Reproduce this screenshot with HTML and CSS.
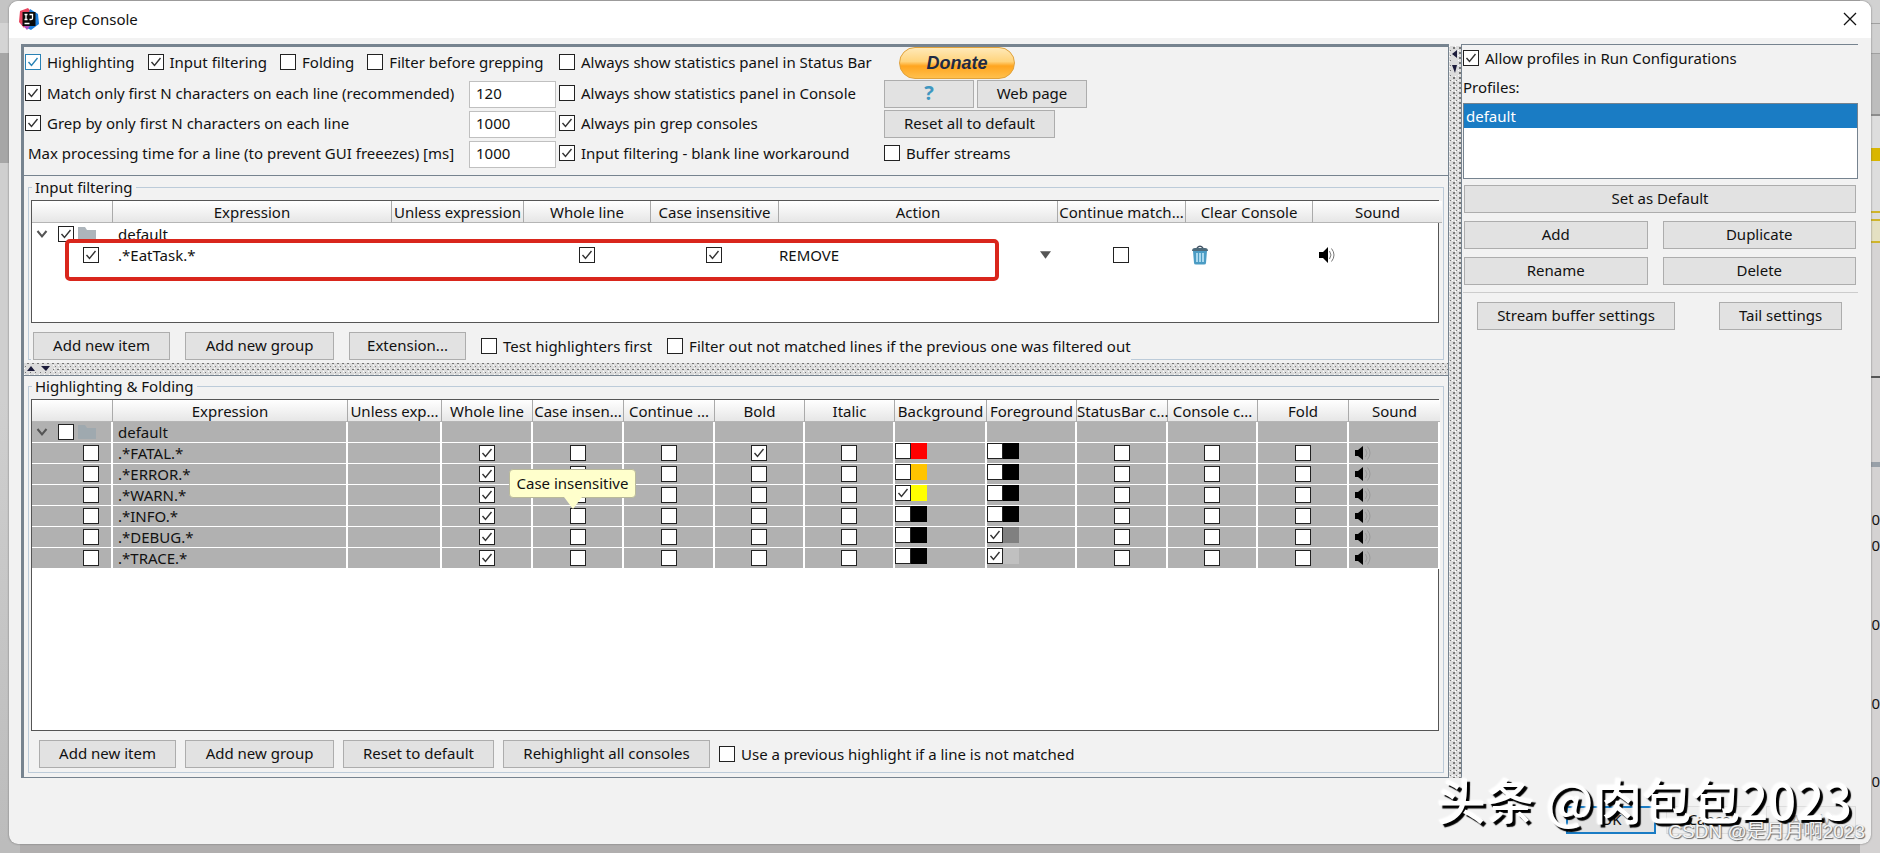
FILE: index.html
```
<!DOCTYPE html>
<html lang="en">
<head>
    <meta charset="UTF-8">
    <meta name="viewport" content="width=device-width, initial-scale=1.0">
    <title>Grep Console</title>
    <link rel="stylesheet" href="styles.css">
</head>
<body>
    <div class="ide ide-left"></div>
    <div class="ide ide-right">
        <span class="digit d1">0</span>
        <span class="digit d2">0</span>
        <span class="digit d3">0</span>
        <span class="digit d4">0</span>
        <span class="digit d5">0</span>
    </div>

    <svg width="0" height="0" class="defs">
        <symbol id="chevron" viewBox="0 0 12 12"><path d="M1.500 3l4.500 5.500L10.500 3" fill="none" stroke="#555" stroke-width="2"/></symbol>
        <symbol id="folder" viewBox="0 0 18 16"><path d="M0 1h7l2 3h9v11H0z" fill="currentColor"/></symbol>
        <symbol id="speaker" viewBox="0 0 18 16">
            <path d="M1 5h4l5-5v16l-5-5H1z"/>
            <path d="M11.500 4q3 4 0 8M13.500 1.500q5 6.500 0 13" fill="none" stroke="#777" stroke-width="1"/>
        </symbol>
        <symbol id="speaker-off" viewBox="0 0 18 16">
            <path d="M1 5h3l5-4v14l-5-4H1z"/>
            <path d="M11.500 4q3 4 0 8M13.500 1.500q5 6.500 0 13" fill="none" stroke="#999" stroke-width="1"/>
        </symbol>
        <symbol id="trash" viewBox="0 0 18 20">
            <path d="M6 3q3-3.500 6 0" fill="none" stroke="#456" stroke-width="1.500"/>
            <path d="M1 6q0-3 3-3h10q3 0 3 3z" fill="#4e6a7a"/>
            <path d="M2 6h14l-1 12q0 1.500-2 1.500H5q-2 0-2-1.500z" fill="#4b9cc4"/>
            <path d="M6 8v9M9 8v9M12 8v9" stroke="#c9ecfb" stroke-width="1.500"/>
        </symbol>
    </svg>

    <div class="dialog">
        <header class="titlebar">
            <svg class="logo" viewBox="0 0 20 22">
                <path d="M1 3l8-3 5 6-9 14-5-6z" fill="#e8455f"/>
                <path d="M11 1l8 5 1 10-8 6-6-3z" fill="#1d7ddb"/>
                <path d="M2 15l6 7 3-4z" fill="#b24fc0"/>
                <rect x="3.500" y="4" width="13" height="14" fill="#0a0a0a"/>
                <path d="M5.500 6.500h3M7 6.500v5M5.500 11.500h3M10.500 6.500h3v4q0 1-1.500 1h-1.500M5.500 15.500h5" fill="none" stroke="#fff" stroke-width="1.300"/>
            </svg>
            <h1>Grep Console</h1>
            <button class="close" aria-label="Close">
                <svg viewBox="0 0 14 14"><path d="M1 1l12 12M13 1L1 13" stroke="#111" stroke-width="1.300"/></svg>
            </button>
        </header>

        <div class="content">
            <main class="left">
                <section class="options">
                    <div class="row-main">
                        <label class="focus"><input type="checkbox" checked>Highlighting</label>
                        <label><input type="checkbox" checked>Input filtering</label>
                        <label><input type="checkbox">Folding</label>
                        <label><input type="checkbox">Filter before grepping</label>
                    </div>
                    <label><input type="checkbox">Always show statistics panel in Status Bar</label>
                    <div><button class="donate">Donate</button></div>

                    <label><input type="checkbox" checked>Match only first N characters on each line (recommended)</label>
                    <input type="text" value="120" aria-label="Match limit">
                    <label><input type="checkbox">Always show statistics panel in Console</label>
                    <div class="pair">
                        <button class="btn help">?</button>
                        <button class="btn web">Web page</button>
                    </div>

                    <label><input type="checkbox" checked>Grep by only first N characters on each line</label>
                    <input type="text" value="1000" aria-label="Grep limit">
                    <label><input type="checkbox" checked>Always pin grep consoles</label>
                    <div class="pair"><button class="btn reset-all">Reset all to default</button></div>

                    <label class="plain" for="max-time">Max processing time for a line (to prevent GUI freeezes) [ms]</label>
                    <input type="text" id="max-time" value="1000">
                    <label><input type="checkbox" checked>Input filtering - blank line workaround</label>
                    <label><input type="checkbox">Buffer streams</label>
                </section>

                <fieldset class="group filtering">
                    <legend>Input filtering</legend>
                    <div class="table-box">
                        <table>
                            <colgroup>
                                <col style="width:81px"><col style="width:279px"><col style="width:132px">
                                <col style="width:127px"><col style="width:128px"><col style="width:279px">
                                <col style="width:128px"><col style="width:127px"><col style="width:129px">
                            </colgroup>
                            <thead>
                                <tr>
                                    <th></th><th>Expression</th><th>Unless expression</th><th>Whole line</th>
                                    <th>Case insensitive</th><th>Action</th><th>Continue match...</th>
                                    <th>Clear Console</th><th>Sound</th>
                                </tr>
                            </thead>
                            <tbody>
                                <tr>
                                    <td class="tree">
                                        <svg class="chevron"><use href="#chevron"/></svg>
                                        <input type="checkbox" aria-label="default" checked>
                                        <svg class="folder"><use href="#folder"/></svg>
                                    </td>
                                    <td>default</td><td></td><td></td><td></td><td></td><td></td><td></td><td></td>
                                </tr>
                                <tr>
                                    <td class="tree leaf"><input type="checkbox" aria-label="EatTask" checked></td>
                                    <td>.*EatTask.*</td>
                                    <td></td>
                                    <td class="mid"><input type="checkbox" aria-label="Whole line" checked></td>
                                    <td class="mid"><input type="checkbox" aria-label="Case insensitive" checked></td>
                                    <td class="action"><select aria-label="Action"><option>REMOVE</option></select></td>
                                    <td class="mid"><input type="checkbox" aria-label="Continue matching"></td>
                                    <td><svg class="trash"><use href="#trash"/></svg></td>
                                    <td><svg class="speaker"><use href="#speaker"/></svg></td>
                                </tr>
                            </tbody>
                        </table>
                        <div class="marker"></div>
                    </div>
                    <div class="bar bar-top">
                        <button class="btn w-item">Add new item</button>
                        <button class="btn w-group">Add new group</button>
                        <button class="btn w-ext">Extension...</button>
                        <label><input type="checkbox">Test highlighters first</label>
                        <label><input type="checkbox">Filter out not matched lines if the previous one was filtered out</label>
                    </div>
                </fieldset>

                <div class="split-h">
                    <svg viewBox="0 0 26 7"><path d="M0 6l4-5 4 5zM14 1h9l-4 5z" fill="#1b1b3a"/></svg>
                </div>

                <fieldset class="group folding">
                    <legend>Highlighting &amp; Folding</legend>
                    <div class="table-box">
                        <table class="grid">
                            <colgroup>
                                <col style="width:81px"><col style="width:235px"><col style="width:94px">
                                <col style="width:91px"><col style="width:91px"><col style="width:91px">
                                <col style="width:90px"><col style="width:90px"><col style="width:92px">
                                <col style="width:90px"><col style="width:91px"><col style="width:90px">
                                <col style="width:91px"><col style="width:91px">
                            </colgroup>
                            <thead>
                                <tr>
                                    <th></th><th>Expression</th><th>Unless exp...</th><th>Whole line</th>
                                    <th>Case insen...<div class="tip">Case insensitive</div></th>
                                    <th>Continue ...</th><th>Bold</th><th>Italic</th>
                                    <th>Background</th><th>Foreground</th><th>StatusBar c...</th>
                                    <th>Console c...</th><th>Fold</th><th>Sound</th>
                                </tr>
                            </thead>
                            <tbody id="rules">
                                <tr>
                                    <td class="tree">
                                        <svg class="chevron"><use href="#chevron"/></svg>
                                        <input type="checkbox" aria-label="default">
                                        <svg class="folder"><use href="#folder"/></svg>
                                    </td>
                                    <td>default</td><td></td><td></td><td></td><td></td><td></td>
                                    <td></td><td></td><td></td><td></td><td></td><td></td><td></td>
                                </tr>
                            </tbody>
                        </table>
                    </div>
                    <div class="bar bar-bottom">
                        <button class="btn w-item">Add new item</button>
                        <button class="btn w-group">Add new group</button>
                        <button class="btn w-reset">Reset to default</button>
                        <button class="btn w-rehigh">Rehighlight all consoles</button>
                        <label><input type="checkbox">Use a previous highlight if a line is not matched</label>
                    </div>
                </fieldset>
            </main>

            <div class="split-v">
                <svg viewBox="0 0 7 26"><path d="M6 0v8L1 4zM1 15h5l-2 8z" fill="#1b1b3a"/></svg>
            </div>

            <aside class="right">
                <label><input type="checkbox" checked>Allow profiles in Run Configurations</label>
                <p>Profiles:</p>
                <ul class="profiles">
                    <li class="selected">default</li>
                </ul>
                <div class="profile-buttons">
                    <button class="btn wide">Set as Default</button>
                    <button class="btn">Add</button>
                    <button class="btn">Duplicate</button>
                    <button class="btn">Rename</button>
                    <button class="btn">Delete</button>
                </div>
                <div class="settings">
                    <button class="btn w-stream">Stream buffer settings</button>
                    <button class="btn w-tail">Tail settings</button>
                </div>
            </aside>
        </div>

        <footer class="footer">
            <button class="btn ok">OK</button>
            <button class="btn faint">Cancel</button>
            <button class="btn faint disabled">Apply</button>
        </footer>
    </div>

    <div class="stamp stamp-big">头条 @肉包包2023</div>
    <div class="stamp stamp-small">CSDN @是月月啊2023</div>

    <script>
        const rules = [
            { name: 'FATAL', bold: true, bg: '#ff0000', fg: '#000000' },
            { name: 'ERROR', bg: '#ffc400', fg: '#000000' },
            { name: 'WARN', bgOn: true, bg: '#ffff00', fg: '#000000' },
            { name: 'INFO', bg: '#000000', fg: '#000000' },
            { name: 'DEBUG', bg: '#000000', fgOn: true, fg: '#808080' },
            { name: 'TRACE', bg: '#000000', fgOn: true, fg: '#c0c0c0' }
        ];

        function box(label, checked) {
            return `<input type="checkbox" aria-label="${label}"${checked ? ' checked' : ''}>`;
        }

        function boxCell(label, checked) {
            return `<td class="mid">${box(label, checked)}</td>`;
        }

        function colorCell(label, checked, color) {
            return `<td class="color">${box(label, checked)}<span class="swatch" style="background:${color}"></span></td>`;
        }

        document.getElementById('rules').insertAdjacentHTML('beforeend', rules.map(r => `
            <tr>
                <td class="tree leaf">${box(r.name)}</td>
                <td>.*${r.name}.*</td>
                <td></td>
                ${boxCell('Whole line', true)}
                ${boxCell('Case insensitive')}
                ${boxCell('Continue matching')}
                ${boxCell('Bold', r.bold)}
                ${boxCell('Italic')}
                ${colorCell('Background', r.bgOn, r.bg)}
                ${colorCell('Foreground', r.fgOn, r.fg)}
                ${boxCell('StatusBar count')}
                ${boxCell('Console count')}
                ${boxCell('Fold')}
                <td><svg class="speaker"><use href="#speaker-off"/></svg></td>
            </tr>`).join(''));
    </script>
</body>
</html>
```
FILE: styles.css
```
* {
    box-sizing: border-box;
}
body {
    margin: 0;
    padding: 1px 9px 9px;
    min-height: 100vh;
    display: flex;
    background: #b0aeae;
    color: #111;
    font-family: "Noto Sans", "Noto Sans CJK SC", sans-serif;
    font-size: 15px;
    line-height: 18px;
}
button, input, select {
    font: inherit;
    color: inherit;
}
.defs {
    position: absolute;
}

/* editor window behind the dialog */
.ide {
    position: absolute;
    top: 0;
    bottom: 0;
    width: 20px;
    overflow: hidden;
}
.ide-left {
    left: 0;
    background: linear-gradient(#c4c4c4 0 23px, #d4d4d4 23px 53px, #a6a6a6 53px 163px, #cfcfcf 163px 400px, #bcbcbc 843px);
}
.ide-right {
    right: 0;
    background: linear-gradient(#d2d2d2 0 23px, #a0a0a0 23px 24px, #d0d0d0 24px 53px, #a0a0a0 53px 54px, #bdbdbd 54px 114px, #8c8c8c 114px 116px, #ddd 116px 148px, #d9b600 148px 161px, #ddd 161px 211px, #d0b52a 211px 213px, #ddd 213px 219px, #d0b52a 219px 221px, #e4e0c2 221px 241px, #d0b52a 241px 243px, #d6d4d4 243px 376px, #555 376px 378px, #d4d2d2 378px 462px, #98a0a8 462px 467px, #d4d2d2 467px);
}
.digit {
    position: absolute;
    right: 0;
}
.d1 { top: 510px; }
.d2 { top: 536px; }
.d3 { top: 615px; }
.d4 { top: 694px; }
.d5 { top: 772px; }

.dialog {
    position: relative;
    flex: 1;
    min-width: 0;
    display: flex;
    flex-direction: column;
    background: #f2f2f2;
    border-radius: 9px;
    box-shadow: 0 0 2px #666;
    overflow: hidden;
}
.titlebar {
    display: flex;
    align-items: center;
    height: 37px;
    padding: 0 10px 2px;
    background: #fff;
}
.titlebar h1 {
    flex: 1;
    margin: 0 0 0 4px;
    font-size: 15px;
    font-weight: normal;
}
.logo {
    width: 20px;
    height: 22px;
}
.close {
    display: flex;
    padding: 4px;
    border: 0;
    background: none;
}
.close svg {
    width: 14px;
    height: 14px;
}
.content {
    flex: 1;
    display: flex;
    padding: 6px 13px 0 12px;
}

/* controls */
label {
    display: flex;
    align-items: center;
    gap: 6px;
    padding-bottom: 2px;
    white-space: nowrap;
}
input[type="checkbox"] {
    appearance: none;
    flex: none;
    width: 16px;
    height: 16px;
    margin: 0;
    border: 1px solid #222;
    background: #fff;
}
input[type="checkbox"]:checked {
    background-image: url("data:image/svg+xml,%3Csvg xmlns='http://www.w3.org/2000/svg' viewBox='0 0 14 14'%3E%3Cpath d='M2.500 7l3 3.500 6-7.500' fill='none' stroke='%23333' stroke-width='1.400'/%3E%3C/svg%3E");
}
.focus input[type="checkbox"] {
    border-color: #2a82b5;
    background-image: url("data:image/svg+xml,%3Csvg xmlns='http://www.w3.org/2000/svg' viewBox='0 0 14 14'%3E%3Cpath d='M2.500 7l3 3.500 6-7.500' fill='none' stroke='%232a82b5' stroke-width='1.400'/%3E%3C/svg%3E");
}
input[type="text"] {
    width: 87px;
    height: 27px;
    padding: 0 6px 2px;
    border: 1px solid #c0c0c0;
    background: #fff;
}
.btn {
    height: 28px;
    padding: 0 0 2px;
    border: 1px solid #adadad;
    background: #e2e2e2;
    white-space: nowrap;
}

/* top options */
.left {
    flex: 1;
    min-width: 0;
    display: flex;
    flex-direction: column;
    border: 1px solid #76838f;
    border-width: 3px 1px 1px 3px;
}
.options {
    display: grid;
    grid-template-columns: 444px 90px 325px 1fr;
    grid-template-rows: 32px 30px 30px 30px;
    align-items: center;
    height: 129px;
    padding-left: 1px;
    border-bottom: 1px solid #76838f;
}
.row-main {
    grid-column: span 2;
    display: flex;
    gap: 13px;
}
.plain {
    padding-left: 3px;
}
.donate {
    display: block;
    width: 116px;
    height: 32px;
    margin-left: 15px;
    border: 1px solid #e0a23c;
    border-radius: 16px;
    background: linear-gradient(#ffe9b8, #ffd47c 45%, #ffa51f 60%, #ffc04d);
    color: #1f2a44;
    font: italic bold 18px "Liberation Sans", Arial, sans-serif;
}
.pair {
    display: flex;
    gap: 3px;
}
.help {
    width: 90px;
    color: #3f97c0;
    font-size: 20px;
    font-weight: bold;
}
.web { width: 110px; }
.reset-all { width: 171px; }

/* groups */
.group {
    display: flex;
    flex-direction: column;
    min-width: 0;
    margin: 2px 4px 0;
    padding: 4px 4px 0 2px;
    border: 1px solid #bccbd9;
}
.group legend {
    margin-left: 1px;
    padding: 0 3px;
}
.folding {
    flex: 1;
    margin: 1px 4px 4px;
}
.table-box {
    position: relative;
    border: 1px solid #555;
    background: #fff;
}
.filtering .table-box {
    height: 123px;
}
.folding .table-box {
    flex: 1;
}
table {
    width: 100%;
    table-layout: fixed;
    border-collapse: separate;
    border-spacing: 0;
}
th {
    position: relative;
    height: 22px;
    padding: 0;
    border-right: 1px solid #aaa;
    border-bottom: 1px solid #b5b5b5;
    background: linear-gradient(#fff, #e6e6e6);
    font-weight: normal;
    white-space: nowrap;
}
th:last-child {
    border-right: 0;
}
td {
    height: 21px;
    padding: 0 0 0 5px;
    line-height: 18px;
    white-space: nowrap;
}
td svg, td input {
    display: block;
}
.grid td {
    background: #b1b1b1;
    border-right: 2px solid #fff;
    border-bottom: 1px solid #fff;
}
.mid {
    padding: 0 2px 0 0;
}
.grid .mid {
    padding: 0;
}
.mid input {
    margin: 0 auto;
}
.tree input, .tree svg {
    display: inline-block;
    vertical-align: middle;
}
.tree {
    padding: 0 0 0 4px;
    font-size: 0;
    line-height: 0;
}
.leaf {
    padding-left: 51px;
}
.chevron {
    width: 12px;
    height: 12px;
    margin-right: 10px;
}
.folder {
    width: 18px;
    height: 16px;
    margin-left: 4px;
    color: #adb5bb;
}
.grid .folder {
    color: #9fa9af;
}
.speaker {
    width: 18px;
    height: 16px;
}
.trash {
    width: 18px;
    height: 20px;
}
.action {
    padding: 0;
}
.action select {
    display: block;
    width: 100%;
    height: 20px;
    padding: 0;
    border: 0;
    appearance: none;
    background: url("data:image/svg+xml,%3Csvg xmlns='http://www.w3.org/2000/svg' viewBox='0 0 12 8'%3E%3Cpath d='M0 0h12L6 8z' fill='%23555'/%3E%3C/svg%3E") no-repeat right 7px center / 11px 8px;
}
.color {
    padding: 0;
    font-size: 0;
    line-height: 0;
    vertical-align: top;
}
.color input, .swatch {
    display: inline-block;
    vertical-align: top;
}
.swatch {
    width: 16px;
    height: 16px;
}
.marker {
    position: absolute;
    left: 33px;
    top: 38px;
    width: 934px;
    height: 42px;
    border: 4px solid #d9261c;
    border-radius: 5px;
}
.tip {
    position: absolute;
    z-index: 2;
    left: -24px;
    top: 69px;
    width: 127px;
    height: 29px;
    border: 1px solid #b9b99a;
    border-radius: 4px;
    background: #ffffcc;
    line-height: 27px;
}
.tip::after {
    content: "";
    position: absolute;
    left: 54px;
    top: 27px;
    width: 18px;
    height: 12px;
    background: #ffffcc;
    clip-path: polygon(0 0, 100% 0, 50% 100%);
}
.bar {
    display: flex;
    align-items: center;
}
.bar label {
    padding-bottom: 0;
}
.bar-top {
    position: relative;
    align-self: flex-start;
    gap: 15px;
    margin: 9px 0 -1px;
    padding-left: 2px;
    background: #f2f2f2;
}
.bar-bottom {
    gap: 9px;
    margin: 9px 0 4px;
    padding-left: 8px;
}
.w-item { width: 137px; }
.w-group { width: 149px; }
.w-ext { width: 117px; }
.w-reset { width: 151px; }
.w-rehigh { width: 207px; }

/* splitters */
.split-h {
    height: 13px;
    margin-top: 3px;
    padding: 2px 3px;
    border-bottom: 1px solid #76838f;
    background: url("data:image/svg+xml,%3Csvg xmlns='http://www.w3.org/2000/svg' width='5' height='6'%3E%3Cpath d='M1 1h1v1H1zM3 4h2v1H3z' fill='%23777'/%3E%3Cpath d='M0 3h1v1H0zM4 0h1v1H4z' fill='%23fff'/%3E%3C/svg%3E") 0 2px #dcdcdc;
}
.split-h svg {
    display: block;
    width: 26px;
    height: 7px;
    background: #dcdcdc;
}
.split-v {
    width: 12px;
    margin-top: 2px;
    padding: 4px 2px;
    background: url("data:image/svg+xml,%3Csvg xmlns='http://www.w3.org/2000/svg' width='6' height='5'%3E%3Cpath d='M2 1h2v2H2zM5 4h1v1H5z' fill='%23777'/%3E%3Cpath d='M1 4h1v1H1zM4 0h1v1H4z' fill='%23fff'/%3E%3C/svg%3E") 2px 0 #dcdcdc;
}
.split-v svg {
    display: block;
    width: 7px;
    height: 26px;
    background: #dcdcdc;
}

/* profiles */
.right {
    width: 397px;
    padding: 4px 0 0 1px;
    border-left: 1px solid #76838f;
    border-top: 1px solid #76838f;
}
.right p {
    margin: 9px 0 7px;
}
.profiles {
    height: 76px;
    margin: 0;
    padding: 0;
    border: 1px solid #76838f;
    background: #fff;
    list-style: none;
}
.selected {
    padding-left: 2px;
    background: #1a7cc4;
    color: #fff;
    line-height: 24px;
}
.profile-buttons {
    display: grid;
    grid-template-columns: 184fr 194fr;
    gap: 8px 15px;
    padding: 6px 2px 7px 1px;
    border-bottom: 1px solid #ccc;
}
.wide {
    grid-column: span 2;
}
.settings {
    display: flex;
    justify-content: space-between;
    padding: 9px 16px 0 14px;
}
.w-stream { width: 198px; }
.w-tail { width: 123px; }

.footer {
    display: flex;
    justify-content: flex-end;
    gap: 10px;
    height: 66px;
    padding: 28px 15px 0 0;
}
.footer .btn {
    width: 90px;
}
.footer .ok {
    border: 2px solid #1a7cc4;
}
.footer .faint {
    border-color: #ddd;
    background: #efefef;
}
.footer .disabled {
    color: #aaa;
}

/* watermarks */
.stamp {
    position: absolute;
    white-space: nowrap;
}
.stamp-big {
    right: 28px;
    bottom: 24px;
    color: #fff;
    font-family: "Noto Sans CJK SC", sans-serif;
    font-size: 49px;
    font-weight: 500;
    line-height: 60px;
    text-shadow: 3px 3px 1px #000, -1px -1px 2px #fff;
}
.stamp-small {
    right: 15px;
    bottom: 9px;
    color: #f4f4f4;
    font-family: "Liberation Sans", "Noto Sans CJK SC", sans-serif;
    font-size: 19px;
    line-height: 24px;
    text-shadow: 1px 1px 1px #666, -1px 0 1px #999;
}
```
